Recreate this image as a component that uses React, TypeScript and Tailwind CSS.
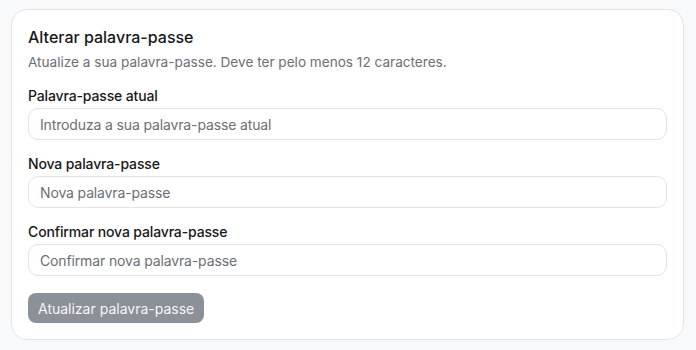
import React from "react";

const font = { fontFamily: "Inter, 'Noto Sans', sans-serif" };

function Field({ label, placeholder }: { label: string; placeholder: string }) {
  return (
    <div className="flex flex-col gap-0.5">
      <label className="pt-0.5 text-[14px] leading-5 font-medium text-[#18181b] tracking-[-0.01em]">{label}</label>
      <input
        className="h-8 w-full rounded-[10px] border border-[#e4e4e7] bg-white px-[11px] text-[14px] text-[#18181b] placeholder:text-[#6b6f76] outline-none tracking-[-0.01em]"
        placeholder={placeholder}
        type="password"
      />
    </div>
  );
}

export default function App() {
  return (
    <div className="min-h-[350px] w-[696px] bg-[#f8f9fa] pl-[11px] pr-[12px] pt-[9px]" style={font}>
      <div className="flex flex-col rounded-[16px] border border-[#e4e4e7] bg-white px-4 pt-4 pb-4">
        <h2 className="text-[16px] leading-[22px] font-medium text-[#18181b]">Alterar palavra-passe</h2>
        <p className="mt-1 text-[13.6px] leading-5 text-[#6b6f76]">
          Atualize a sua palavra-passe. Deve ter pelo menos 12 caracteres.
        </p>
        <div className="mt-3 flex flex-col gap-3">
          <Field label="Palavra-passe atual" placeholder="Introduza a sua palavra-passe atual" />
          <Field label="Nova palavra-passe" placeholder="Nova palavra-passe" />
          <Field label="Confirmar nova palavra-passe" placeholder="Confirmar nova palavra-passe" />
        </div>
        <div className="mt-[17px]">
          <button className="h-[30px] rounded-[8px] bg-[#8b9099] px-[10px] text-[14px] text-white/95">
            Atualizar palavra-passe
          </button>
        </div>
      </div>
    </div>
  );
}
